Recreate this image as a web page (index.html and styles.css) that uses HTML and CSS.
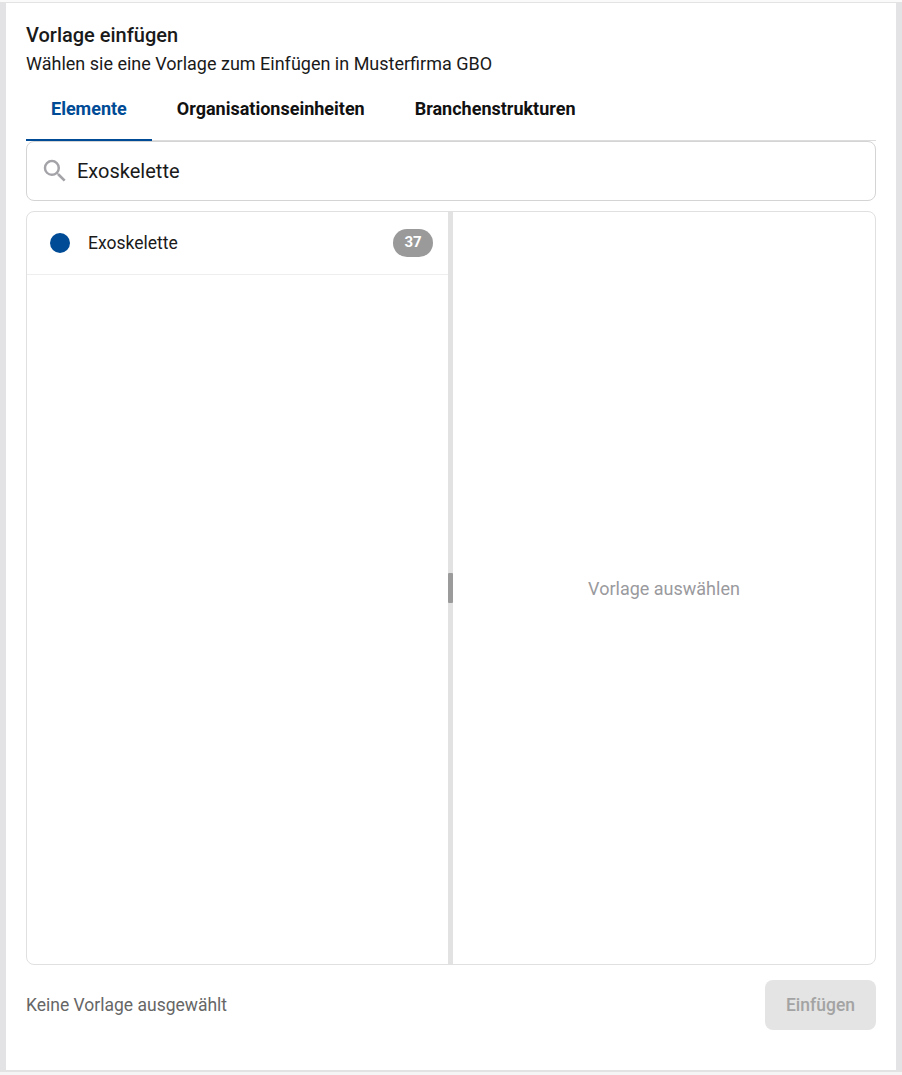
FILE: index.html
```html
<!DOCTYPE html>
<html lang="de">
<head>
<meta charset="utf-8">
<title>Vorlage einfügen</title>
<link rel="stylesheet" href="styles.css">
</head>
<body>
<div class="top-strip"></div>
<main class="dialog">
  <h1 class="title">Vorlage einfügen</h1>
  <p class="subtitle">Wählen sie eine Vorlage zum Einfügen in Musterfirma GBO</p>
  <nav class="tabs">
    <a class="tab active">Elemente</a>
    <a class="tab">Organisationseinheiten</a>
    <a class="tab">Branchenstrukturen</a>
  </nav>
  <div class="search">
    <svg class="search-icon" viewBox="0 0 24 24" width="30" height="30"><path d="M15.5 14h-.79l-.28-.27A6.47 6.47 0 0 0 16 9.5 6.5 6.5 0 1 0 9.5 16c1.61 0 3.09-.59 4.23-1.57l.27.28v.79l5 4.99L20.49 19l-4.99-5zm-6 0C7.01 14 5 11.99 5 9.5S7.01 5 9.5 5 14 7.01 14 9.5 11.99 14 9.5 14z"/></svg>
    <span class="search-text">Exoskelette</span>
  </div>
  <section class="panes">
    <div class="list">
      <div class="row">
        <span class="dot"></span>
        <span class="row-label">Exoskelette</span>
        <span class="badge">37</span>
      </div>
    </div>
    <div class="splitter"><span class="handle"></span></div>
    <div class="preview">Vorlage auswählen</div>
  </section>
  <footer class="footer">
    <span class="status">Keine Vorlage ausgewählt</span>
    <button class="insert" disabled>Einfügen</button>
  </footer>
</main>
<div class="bottom-strip"></div>
</body>
</html>
```
FILE: styles.css
```css
* { box-sizing: border-box; }
html, body { margin: 0; height: 100%; }
body {
  width: 902px;
  height: 1075px;
  overflow: hidden;
  display: flex;
  flex-direction: column;
  background: #e3e3e5;
  font-family: Roboto, "Liberation Sans", sans-serif;
  color: #1a1a1a;
}
.top-strip {
  height: 3px;
  background: #fafafa;
  border-bottom: 1px solid #e3e3e3;
  flex: none;
}
.dialog {
  flex: none;
  height: 1067px;
  margin: 0 6px;
  padding: 20px 20px 0;
  background: #fff;
  display: flex;
  flex-direction: column;
}
.bottom-strip {
  flex: 1;
  background: #f5f5f5;
  border-top: 2px solid #e3e3e3;
}
.title {
  margin: 0;
  font-size: 20px;
  line-height: 24px;
  font-weight: 500;
}
.subtitle {
  margin: 7px 0 0;
  font-size: 18px;
  line-height: 20px;
}
.tabs {
  display: flex;
  height: 67px;
  padding-top: 4px;
  border-bottom: 1px solid #dcdcdc;
  flex: none;
}
.tab {
  padding: 0 25px;
  height: 63px;
  line-height: 62px;
  font-size: 18px;
  font-weight: 700;
  color: #111;
}
.tab.active {
  color: #004b96;
  border-bottom: 2px solid #004b96;
}
.search {
  height: 60px;
  border: 1px solid #d4d4d4;
  border-radius: 8px;
  display: flex;
  align-items: center;
  padding-left: 13px;
  gap: 7px;
  flex: none;
}
.search-icon { fill: #a3a3a8; flex: none; }
.search-text { font-size: 20px; }
.panes {
  height: 754px;
  margin-top: 10px;
  border: 1px solid #e0e0e0;
  border-radius: 8px;
  display: flex;
  flex: none;
}
.list { width: 421px; flex: none; }
.row {
  height: 63px;
  border-bottom: 1px solid #eee;
  display: flex;
  align-items: center;
  padding: 0 15px 0 23px;
}
.dot {
  width: 20px;
  height: 20px;
  border-radius: 50%;
  background: #004b96;
  flex: none;
}
.row-label {
  margin-left: 18px;
  font-size: 17.5px;
  flex: 1;
}
.badge {
  width: 40px;
  height: 28px;
  border-radius: 14px;
  background: #9a9a9a;
  color: #fff;
  font-size: 15px;
  font-weight: 700;
  line-height: 27px;
  text-align: center;
}
.splitter {
  width: 5px;
  flex: none;
  background: #e2e2e2;
  display: flex;
  align-items: center;
}
.handle {
  width: 5px;
  height: 30px;
  background: #9b9b9b;
  border-radius: 1px;
}
.preview {
  flex: 1;
  display: flex;
  align-items: center;
  justify-content: center;
  color: #9a9a9e;
  font-size: 18px;
}
.footer {
  margin-top: 15px;
  display: flex;
  align-items: center;
  justify-content: space-between;
}
.status { font-size: 17.5px; color: #666; }
.insert {
  width: 111px;
  height: 50px;
  border: 0;
  border-radius: 8px;
  background: #e4e4e4;
  color: #a3a3a3;
  font-family: inherit;
  font-size: 17.5px;
  font-weight: 500;
}
```
